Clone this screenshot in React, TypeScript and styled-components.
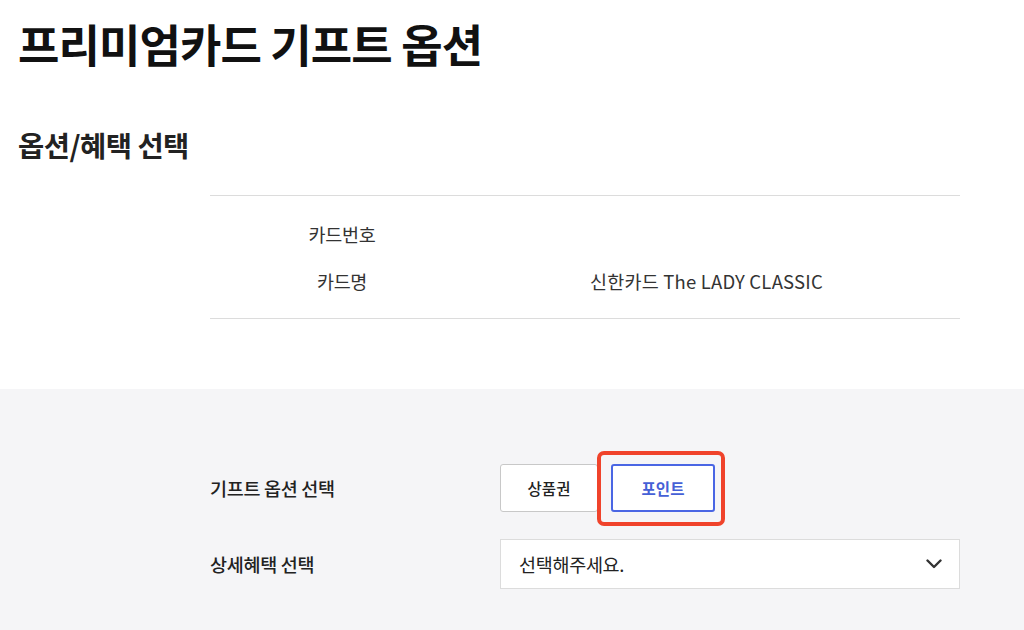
import React from 'react';
import styled, { createGlobalStyle } from 'styled-components';

const GlobalStyle = createGlobalStyle`
  html, body {
    margin: 0;
    padding: 0;
    background: #fff;
  }
  body {
    font-family: "Noto Sans CJK KR", "Noto Sans", sans-serif;
    color: #222;
  }
`;

const Page = styled.div`
  width: 1024px;
  height: 630px;
  overflow: hidden;
`;

const Header = styled.div`
  padding: 17px 18px 0;
`;

const Title = styled.h1`
  margin: 0;
  font-size: 45px;
  line-height: 54px;
  font-weight: 700;
  letter-spacing: -0.9px;
  color: #111;
`;

const SubTitle = styled.h2`
  margin: 55px 0 0;
  font-size: 28.5px;
  line-height: 38px;
  font-weight: 700;
  letter-spacing: -0.5px;
  color: #222;
`;

const InfoTable = styled.div`
  margin: 31px 64px 0 210px;
  padding: 14px 0;
  border-top: 1px solid #dcdcdc;
  border-bottom: 1px solid #dcdcdc;
`;

const InfoRow = styled.div`
  display: grid;
  grid-template-columns: 264px 1fr;
  align-items: center;
  height: 47px;
  font-size: 18.5px;
  color: #333;
`;

const InfoLabel = styled.div`
  text-align: center;
  letter-spacing: -0.3px;
`;

const InfoValue = styled.div`
  padding-left: 116px;
  letter-spacing: 0.2px;
`;

const OptionSection = styled.section`
  margin-top: 70px;
  background: #f5f5f7;
  padding: 75px 64px 60px 210px;
  display: flex;
  flex-direction: column;
  gap: 27px;
`;

const OptionRow = styled.div`
  display: grid;
  grid-template-columns: 290px 1fr;
  align-items: center;
`;

const OptionLabel = styled.div`
  font-size: 18.5px;
  font-weight: 500;
  color: #222;
  letter-spacing: -0.3px;
`;

const ButtonGroup = styled.div`
  display: flex;
  gap: 13px;
  align-items: center;
`;

const ToggleButton = styled.button<{ $active?: boolean; $width: number }>`
  position: relative;
  width: ${p => p.$width}px;
  height: 48px;
  box-sizing: border-box;
  background: #fff;
  border: ${p => (p.$active ? '2px solid #4a66e4' : '1px solid #c8c8c8')};
  border-radius: 3px;
  font-family: inherit;
  font-size: 15.5px;
  font-weight: ${p => (p.$active ? 700 : 500)};
  color: ${p => (p.$active ? '#4560d6' : '#222')};
  cursor: pointer;
`;

const Highlight = styled.span`
  position: absolute;
  top: -15px;
  bottom: -16px;
  left: -16px;
  right: -12px;
  border: 4px solid #f0432b;
  border-radius: 7px;
  pointer-events: none;
`;

const SelectBox = styled.div`
  height: 50px;
  box-sizing: border-box;
  background: #fff;
  border: 1px solid #dcdcdc;
  display: flex;
  align-items: center;
  justify-content: space-between;
  padding: 0 17px 0 18px;
  font-size: 18.5px;
  color: #222;
  letter-spacing: -0.3px;
`;

function Chevron() {
  return (
    <svg width="16" height="10" viewBox="0 0 16 10" fill="none">
      <path d="M1.5 1.5 L8 8 L14.5 1.5" stroke="#333" strokeWidth="2.4" strokeLinecap="round" strokeLinejoin="round" />
    </svg>
  );
}

export default function App() {
  return (
    <>
      <GlobalStyle />
      <Page>
        <Header>
          <Title>프리미엄카드 기프트 옵션</Title>
          <SubTitle>옵션/혜택 선택</SubTitle>
        </Header>

        <InfoTable>
          <InfoRow>
            <InfoLabel>카드번호</InfoLabel>
            <InfoValue></InfoValue>
          </InfoRow>
          <InfoRow>
            <InfoLabel>카드명</InfoLabel>
            <InfoValue>신한카드 The LADY CLASSIC</InfoValue>
          </InfoRow>
        </InfoTable>

        <OptionSection>
          <OptionRow>
            <OptionLabel>기프트 옵션 선택</OptionLabel>
            <ButtonGroup>
              <ToggleButton $width={98}>상품권</ToggleButton>
              <ToggleButton $width={104} $active>
                포인트
                <Highlight />
              </ToggleButton>
            </ButtonGroup>
          </OptionRow>
          <OptionRow>
            <OptionLabel>상세혜택 선택</OptionLabel>
            <SelectBox>
              <span>선택해주세요.</span>
              <Chevron />
            </SelectBox>
          </OptionRow>
        </OptionSection>
      </Page>
    </>
  );
}
